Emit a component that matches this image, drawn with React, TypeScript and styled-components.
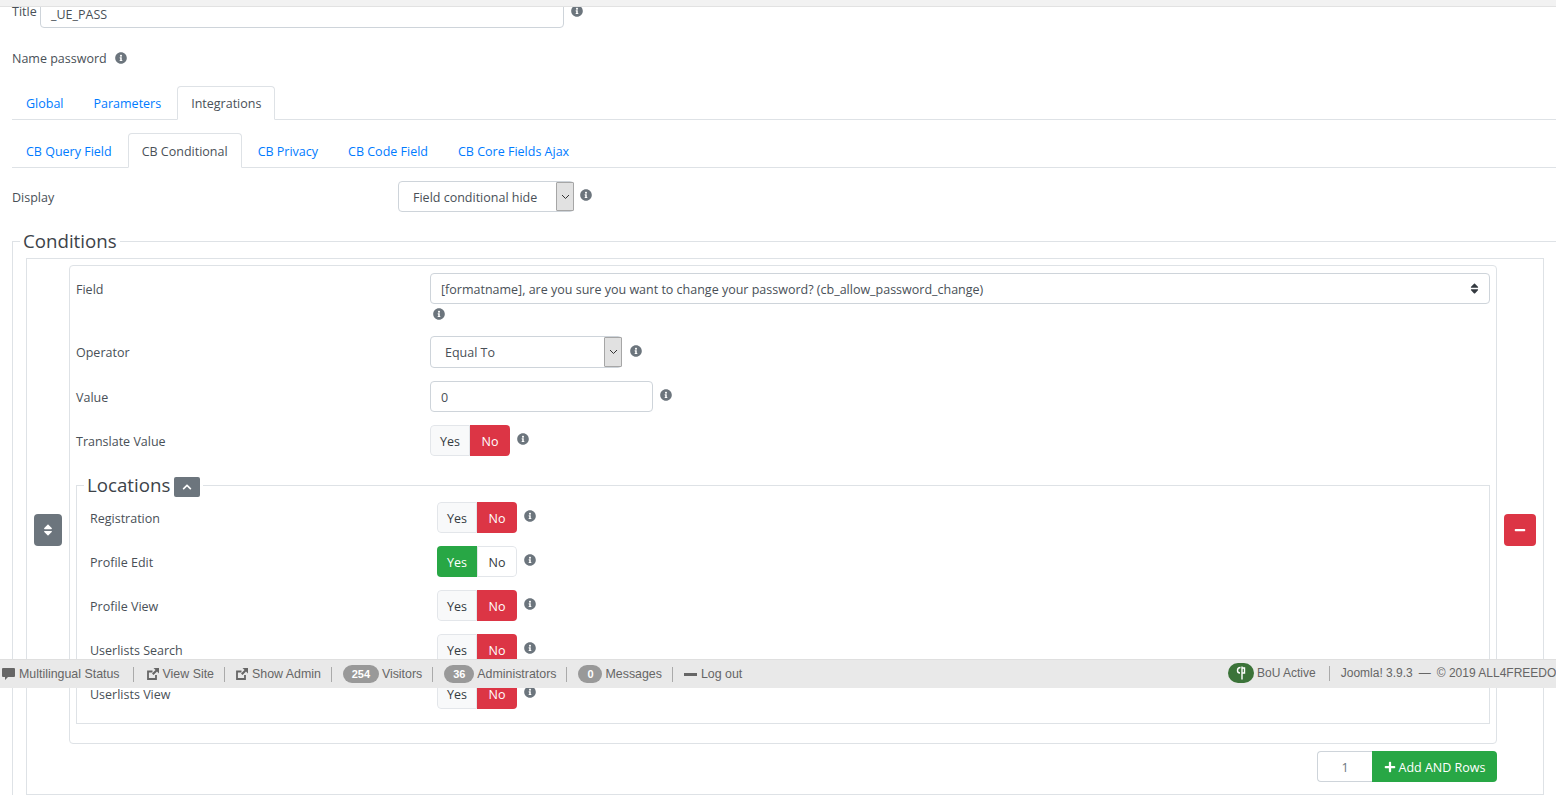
import React from "react";
import styled, { createGlobalStyle } from "styled-components";
import { FaInfoCircle, FaSort, FaChevronUp, FaMinus, FaPlus } from "react-icons/fa";

const GlobalStyle = createGlobalStyle`
  html, body {
    margin: 0;
    padding: 0;
    height: 795px;
    overflow: hidden;
    background: #fff;
  }
  * { box-sizing: border-box; }
`;

const Page = styled.div`
  position: relative;
  width: 1556px;
  height: 795px;
  overflow: hidden;
  background: #fff;
  color: #495057;
  font-family: "Open Sans", "Noto Sans", sans-serif;
  font-size: 12.5px;
`;

const TopStrip = styled.div`
  position: relative;
  z-index: 2;
  height: 7px;
  background: #f2f2f2;
  border-bottom: 1px solid #e2e2e2;
`;

const Content = styled.div`
  margin-top: -17px;
  padding-left: 12px;
`;

const TitleRow = styled.div`
  display: flex;
  height: 38px;
`;

const SmallLabel = styled.label`
  width: 28px;
  margin-top: 13px;
  line-height: 18px;
`;

const TextInput = styled.div<{ $w: number; $h?: number; $pt?: number }>`
  width: ${(p) => p.$w}px;
  height: ${(p) => p.$h ?? 31}px;
  padding: ${(p) => p.$pt ?? 1}px 10px 0;
  display: flex;
  align-items: center;
  border: 1px solid #ced4da;
  border-radius: 4px;
  background: #fff;
`;

const Info = styled(FaInfoCircle)<{ $x?: number; $y?: number }>`
  flex: none;
  width: 12px;
  height: 12px;
  color: #6c757d;
  margin-left: ${(p) => p.$x ?? 7}px;
  margin-top: ${(p) => p.$y ?? 8}px;
`;

const NameRow = styled.div`
  display: flex;
  align-items: center;
  height: 20px;
  margin-top: 20px;
`;

const TabBar = styled.div<{ $top: number; $h: number }>`
  display: flex;
  height: ${(p) => p.$h}px;
  margin-top: ${(p) => p.$top}px;
  border-bottom: 1px solid #dee2e6;
`;

const Tab = styled.div<{ $active?: boolean }>`
  height: calc(100% + 1px);
  margin-right: 2px;
  padding: 1px 13px 0;
  display: flex;
  align-items: center;
  border: 1px solid ${(p) => (p.$active ? "#dee2e6" : "transparent")};
  border-bottom-color: ${(p) => (p.$active ? "#fff" : "transparent")};
  border-radius: 4px 4px 0 0;
  background: ${(p) => (p.$active ? "#fff" : "transparent")};
  color: ${(p) => (p.$active ? "#495057" : "#007bff")};
  white-space: nowrap;
`;

const DisplayRow = styled.div`
  display: flex;
  align-items: center;
  height: 31px;
  margin-top: 13px;
`;

const DisplayLabel = styled.div`
  width: 386px;
  padding-top: 1px;
`;

const SelectBox = styled.div<{ $w: number; $h: number }>`
  position: relative;
  flex: none;
  width: ${(p) => p.$w}px;
  height: ${(p) => p.$h}px;
  padding: 1px 0 0 14px;
  display: flex;
  align-items: center;
  border: 1px solid #ced4da;
  border-radius: 4px;
  background: #fff;
`;

const SelectArrow = styled.div`
  position: absolute;
  top: 0;
  right: -1px;
  bottom: 0;
  width: 18px;
  display: flex;
  align-items: center;
  justify-content: center;
  background: #e1e1e1;
  border: 1px solid #a6a6a6;
  border-radius: 1px;
`;

const OuterFieldset = styled.fieldset`
  width: 1600px;
  margin: 17px 0 0;
  padding: 5px 0 0 13px;
  border: 0;
  border-top: 1px solid #dee2e6;
  border-left: 1px solid #dee2e6;
`;

const Legend = styled.legend`
  display: flex;
  align-items: center;
  height: 24px;
  margin-left: -6px;
  padding: 0 3px;
  font-size: 18.7px;
  line-height: 24px;
  color: #3d4349;
`;

const RowsTable = styled.div`
  display: flex;
  width: 1518px;
  border: 1px solid #dee2e6;
  padding-top: 6px;
`;

const SideCell = styled.div<{ $w: number }>`
  flex: none;
  width: ${(p) => p.$w}px;
  display: flex;
  align-items: center;
  justify-content: center;
`;

const MiddleCell = styled.div`
  flex: none;
  width: 1428px;
  padding-bottom: 12px;
`;

const IconButton = styled.div<{ $bg: string }>`
  width: 28px;
  height: 32px;
  display: flex;
  align-items: center;
  justify-content: center;
  border-radius: 4px;
  color: #fff;
  background: ${(p) => p.$bg};
`;

const RemoveButton = styled(IconButton)`
  width: 32px;
  margin-left: -1px;
`;

const Card = styled.div`
  padding: 7px 6px 19px;
  border: 1px solid #dee2e6;
  border-radius: 4px;
`;

const FormRow = styled.div<{ $labelW: number; $gap?: number }>`
  display: grid;
  grid-template-columns: ${(p) => p.$labelW}px 1fr;
  align-items: center;
  margin-bottom: ${(p) => p.$gap ?? 13}px;
  &:last-child { margin-bottom: 0; }
`;

const RowLabel = styled.div`
  padding-top: 1px;
`;

const Control = styled.div`
  display: flex;
  align-items: flex-start;
`;

const FieldSelect = styled(TextInput)`
  position: relative;
  width: 1060px;
`;

const SortCaret = styled(FaSort)`
  position: absolute;
  right: 9px;
  top: 8px;
  width: 11px;
  height: 13px;
  color: #343a40;
`;

const FieldBlock = styled.div`
  margin-bottom: 13px;
`;

const FieldHelp = styled.div`
  height: 19px;
  padding-left: 354px;
  display: flex;
`;

const Toggle = styled.div`
  display: flex;
  width: 80px;
  height: 31px;
  border-radius: 4px;
  overflow: hidden;
`;

const ToggleSide = styled.div<{ $bg?: string }>`
  width: 40px;
  padding-top: 1px;
  display: flex;
  align-items: center;
  justify-content: center;
  color: ${(p) => (p.$bg ? "#fff" : "#343a40")};
  background: ${(p) => p.$bg ?? "#fff"};
`;

const ToggleOff = styled(ToggleSide)<{ $side: "left" | "right" }>`
  background: ${(p) => (p.$side === "left" ? "#f8f9fa" : "#fff")};
  border: 1px solid #e3e6ea;
  border-radius: ${(p) => (p.$side === "left" ? "4px 0 0 4px" : "0 4px 4px 0")};
`;

const LocationsFieldset = styled.fieldset`
  margin: 17px 0 0;
  padding: 5px 13px 14px;
  border: 1px solid #dee2e6;
`;

const CollapseButton = styled.span`
  width: 26px;
  height: 20px;
  margin-left: 4px;
  margin-top: 4px;
  display: flex;
  align-items: center;
  justify-content: center;
  border-radius: 2px;
  color: #fff;
  background: #6c757d;
`;

const AddRow = styled.div`
  display: flex;
  justify-content: flex-end;
  margin-top: 7px;
`;

const CountInput = styled.div`
  width: 55px;
  height: 31px;
  padding-top: 1px;
  display: flex;
  align-items: center;
  justify-content: center;
  border: 1px solid #ced4da;
  border-right: 0;
  border-radius: 4px 0 0 4px;
  color: #6c757d;
`;

const AddButton = styled.div`
  width: 125px;
  height: 31px;
  padding-top: 1px;
  display: flex;
  align-items: center;
  justify-content: center;
  gap: 3px;
  border-radius: 0 4px 4px 0;
  color: #fff;
  background: #28a745;
  white-space: nowrap;
`;

const StatusBar = styled.div`
  position: absolute;
  z-index: 3;
  left: 0;
  top: 659px;
  width: 1556px;
  height: 29px;
  display: flex;
  align-items: center;
  overflow: hidden;
  background: #e9e9e9;
  border-top: 1px solid #dfdfdf;
  color: #666;
  font-family: "Liberation Sans", Arial, sans-serif;
  font-size: 12.4px;
  white-space: nowrap;
`;

const StatusLeft = styled.div`
  flex: none;
  width: 1228px;
  display: flex;
  align-items: center;
  padding-left: 2px;
`;

const StatusRight = styled.div`
  flex: none;
  display: flex;
  align-items: center;
  margin-top: -2px;
  font-size: 12px;
`;

const StatusItem = styled.span`
  display: flex;
  align-items: center;
  gap: 4px;
`;

const StatusBadgeItem = styled(StatusItem)`
  gap: 3px;
`;

const Sep = styled.span<{ $l?: number; $r?: number }>`
  width: 1px;
  height: 15px;
  margin: 0 ${(p) => p.$r ?? 11}px 0 ${(p) => p.$l ?? 10}px;
  background: #aaa;
`;

const Badge = styled.span<{ $w: number }>`
  width: ${(p) => p.$w}px;
  height: 18px;
  display: flex;
  align-items: center;
  justify-content: center;
  border-radius: 9px;
  color: #fff;
  background: #999;
  font-size: 11px;
  font-weight: 700;
`;

const BouPill = styled.span`
  width: 26px;
  height: 20px;
  display: flex;
  align-items: center;
  justify-content: center;
  border-radius: 10px;
  background: #3b7339;
`;

const Dash = styled.span`
  margin: 0 6px;
`;

const MinusBar = styled.span`
  width: 13px;
  height: 3px;
  background: #666;
`;

function Chevron() {
  return (
    <svg width="9" height="6" viewBox="0 0 9 6">
      <path d="M1 1l3.5 3.5L8 1" fill="none" stroke="#333" strokeWidth="1" />
    </svg>
  );
}

function BubbleIcon() {
  return (
    <svg width="13" height="13" viewBox="0 0 13 13">
      <path d="M1 0h11a1 1 0 0 1 1 1v7a1 1 0 0 1-1 1H6l-3 3V9H1a1 1 0 0 1-1-1V1a1 1 0 0 1 1-1z" fill="#666" />
    </svg>
  );
}

function NewTabIcon() {
  return (
    <svg width="12" height="12" viewBox="0 0 12 12">
      <path d="M9 7V11H1V3.5H5.5" fill="none" stroke="#666" strokeWidth="1.8" />
      <path d="M6.5 0H12V5.5L10 3.5L6.5 7L5 5.5L8.5 2Z" fill="#666" />
    </svg>
  );
}

function BouIcon() {
  return (
    <svg width="10" height="16" viewBox="0 0 10 16">
      <path d="M4.5 2.5C2.5 2.5 1.5 4 1.5 5.5S2.5 8 4 8M6 1.5v13M6 3h2.5v5H6" fill="none" stroke="#fff" strokeWidth="1.4" />
    </svg>
  );
}

function YesNo({ on }: { on: "yes" | "no" }) {
  return (
    <Toggle>
      {on === "yes" ? <ToggleSide $bg="#28a745">Yes</ToggleSide> : <ToggleOff $side="left">Yes</ToggleOff>}
      {on === "no" ? <ToggleSide $bg="#dc3545">No</ToggleSide> : <ToggleOff $side="right">No</ToggleOff>}
    </Toggle>
  );
}

const locations: { label: string; on: "yes" | "no" }[] = [
  { label: "Registration", on: "no" },
  { label: "Profile Edit", on: "yes" },
  { label: "Profile View", on: "no" },
  { label: "Userlists Search", on: "no" },
  { label: "Userlists View", on: "no" },
];

export default function App() {
  return (
    <Page>
      <GlobalStyle />
      <TopStrip />
      <Content>
        <TitleRow>
          <SmallLabel>Title</SmallLabel>
          <TextInput $w={524} $h={38} $pt={10}>_UE_PASS</TextInput>
          <Info $x={7} $y={15} />
        </TitleRow>
        <NameRow>
          Name password
          <Info $x={8} $y={0} />
        </NameRow>
        <TabBar $top={18} $h={34}>
          <Tab>Global</Tab>
          <Tab>Parameters</Tab>
          <Tab $active>Integrations</Tab>
        </TabBar>
        <TabBar $top={13} $h={35}>
          <Tab>CB Query Field</Tab>
          <Tab $active>CB Conditional</Tab>
          <Tab>CB Privacy</Tab>
          <Tab>CB Code Field</Tab>
          <Tab>CB Core Fields Ajax</Tab>
        </TabBar>
        <DisplayRow>
          <DisplayLabel>Display</DisplayLabel>
          <SelectBox $w={176} $h={31}>
            Field conditional hide
            <SelectArrow><Chevron /></SelectArrow>
          </SelectBox>
          <Info $x={6} $y={-4} />
        </DisplayRow>
        <OuterFieldset>
          <Legend>Conditions</Legend>
          <RowsTable>
            <SideCell $w={42}>
              <IconButton $bg="#6c757d"><FaSort size={14} /></IconButton>
            </SideCell>
            <MiddleCell>
              <Card>
                <FieldBlock>
                  <FormRow $labelW={354} $gap={0}>
                    <RowLabel>Field</RowLabel>
                    <FieldSelect $w={1060}>
                      [formatname], are you sure you want to change your password? (cb_allow_password_change)
                      <SortCaret />
                    </FieldSelect>
                  </FormRow>
                  <FieldHelp><Info $x={3} $y={4} /></FieldHelp>
                </FieldBlock>
                <FormRow $labelW={354}>
                  <RowLabel>Operator</RowLabel>
                  <Control>
                    <SelectBox $w={192} $h={32}>
                      Equal To
                      <SelectArrow><Chevron /></SelectArrow>
                    </SelectBox>
                    <Info $x={8} $y={9} />
                  </Control>
                </FormRow>
                <FormRow $labelW={354}>
                  <RowLabel>Value</RowLabel>
                  <Control>
                    <TextInput $w={223}>0</TextInput>
                    <Info $y={8} />
                  </Control>
                </FormRow>
                <FormRow $labelW={354}>
                  <RowLabel>Translate Value</RowLabel>
                  <Control>
                    <YesNo on="no" />
                    <Info $y={8} />
                  </Control>
                </FormRow>
                <LocationsFieldset>
                  <Legend>
                    Locations
                    <CollapseButton><FaChevronUp size={10} /></CollapseButton>
                  </Legend>
                  {locations.map((row) => (
                    <FormRow $labelW={347} key={row.label}>
                      <RowLabel>{row.label}</RowLabel>
                      <Control>
                        <YesNo on={row.on} />
                        <Info $y={8} />
                      </Control>
                    </FormRow>
                  ))}
                </LocationsFieldset>
              </Card>
              <AddRow>
                <CountInput>1</CountInput>
                <AddButton><FaPlus size={12} />Add AND Rows</AddButton>
              </AddRow>
            </MiddleCell>
            <SideCell $w={46}>
              <RemoveButton $bg="#dc3545"><FaMinus size={12} /></RemoveButton>
            </SideCell>
          </RowsTable>
        </OuterFieldset>
      </Content>
      <StatusBar>
        <StatusLeft>
          <StatusItem><BubbleIcon />Multilingual Status</StatusItem>
          <Sep $l={13} $r={13} />
          <StatusItem><NewTabIcon />View Site</StatusItem>
          <Sep $r={11} />
          <StatusItem><NewTabIcon />Show Admin</StatusItem>
          <Sep />
          <StatusBadgeItem><Badge $w={36}>254</Badge>Visitors</StatusBadgeItem>
          <Sep />
          <StatusBadgeItem><Badge $w={30}>36</Badge>Administrators</StatusBadgeItem>
          <Sep />
          <StatusBadgeItem><Badge $w={24}>0</Badge>Messages</StatusBadgeItem>
          <Sep />
          <StatusItem><MinusBar />Log out</StatusItem>
        </StatusLeft>
        <StatusRight>
          <StatusBadgeItem><BouPill><BouIcon /></BouPill>BoU Active</StatusBadgeItem>
          <Sep $l={13} $r={11} />
          Joomla! 3.9.3
          <Dash>—</Dash>
          © 2019 ALL4FREEDOM
        </StatusRight>
      </StatusBar>
    </Page>
  );
}
